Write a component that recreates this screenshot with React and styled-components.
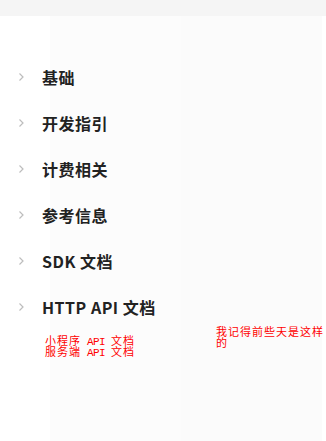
import React from "react";
import styled, { createGlobalStyle } from "styled-components";

const Global = createGlobalStyle`
  html, body { margin: 0; padding: 0; background: #fff; }
  body { font-family: "Noto Sans CJK SC", "Noto Sans", sans-serif; }
`;

const Page = styled.div`
  width: 326px;
  min-height: 441px;
  display: flex;
  flex-direction: column;
  background: linear-gradient(
    to right,
    #ffffff 0 50px,
    #fcfcfc 50px 181px,
    #fbfbfb 181px 322px,
    #ffffff 322px
  );
`;

const TopBar = styled.div`
  height: 16px;
  background: #f5f5f5;
`;

const Nav = styled.ul`
  list-style: none;
  margin: 0;
  padding: 50px 0 0 17px;
  display: flex;
  flex-direction: column;
  gap: 24px;
`;

const Item = styled.li`
  display: flex;
  align-items: center;
  gap: 17px;
  height: 22px;
  font-size: 16px;
  font-weight: 700;
  letter-spacing: 0.5px;
  color: #222;
  line-height: 22px;
`;

const Chevron = () => (
  <svg width="8" height="10" viewBox="0 0 8 10" aria-hidden="true">
    <polyline points="2.5,1.5 6,5 2.5,8.5" fill="none" stroke="#bdbdbd" strokeWidth="1.2" />
  </svg>
);

const Notes = styled.div`
  display: grid;
  grid-template-columns: 216px 1fr;
  margin-top: 8px;
  color: #ff0000;
  font-size: 11px;
  letter-spacing: 1px;
  line-height: 11px;
  font-family: "Noto Sans CJK SC", sans-serif;
`;

const LeftNote = styled.div`
  padding: 9px 0 0 45px;
  display: flex;
  flex-direction: column;
`;

const Line = styled.div`
  height: 11px;
  white-space: nowrap;
`;

const RightNote = styled.div``;

const Mono = styled.span`
  font-family: "Liberation Mono", monospace;
  font-size: 11px;
  letter-spacing: -0.6px;
  white-space: pre;
`;

const items = ["基础", "开发指引", "计费相关", "参考信息", "SDK 文档", "HTTP API 文档"];

export default function App() {
  return (
    <>
      <Global />
      <Page>
        <TopBar />
        <Nav>
          {items.map((t) => (
            <Item key={t}>
              <Chevron />
              <span>{t}</span>
            </Item>
          ))}
        </Nav>
        <Notes>
          <LeftNote>
            <Line>小程序<Mono> API </Mono>文档</Line>
            <Line>服务端<Mono> API </Mono>文档</Line>
          </LeftNote>
          <RightNote>我记得前些天是这样的</RightNote>
        </Notes>
      </Page>
    </>
  );
}
